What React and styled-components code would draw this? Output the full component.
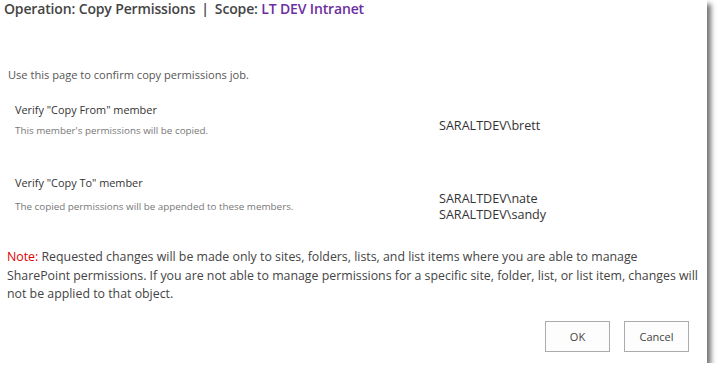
import React from "react";
import styled, { createGlobalStyle } from "styled-components";

const Global = createGlobalStyle`
  html, body { margin: 0; padding: 0; background: #ffffff; }
  body { font-family: "Open Sans", "Noto Sans", sans-serif; }
`;

const Dialog = styled.div`
  width: 707px;
  height: 363px;
  background: #fff;
  box-shadow: 4px 4px 5px rgba(0, 0, 0, 0.55);
  display: flex;
  flex-direction: column;
  box-sizing: border-box;
  padding: 0 0 11px 0;
`;

const Header = styled.div`
  font-size: 14px;
  font-weight: 600;
  color: #444;
  padding: 0 0 0 4px;
  line-height: 18px;
  letter-spacing: -0.15px;
`;

const Scope = styled.span`
  color: #6b2fa0;
`;

const Sep = styled.span`
  padding: 0 6px;
`;

const Intro = styled.div`
  margin: 49px 0 0 8px;
  font-size: 11.1px;
  color: #555;
  line-height: 16px;
`;

const Section = styled.div`
  display: grid;
  grid-template-columns: 424px 1fr;
  align-items: start;
  padding-left: 15px;
  margin-top: ${(p) => p.$top}px;
`;

const Label = styled.div`
  font-size: 10.9px;
  color: #333;
  line-height: 16px;
`;

const Desc = styled.div`
  font-size: 9.85px;
  color: #777;
  line-height: 14px;
  margin-top: ${(p) => p.$top}px;
`;

const Members = styled.div`
  font-size: 12.6px;
  color: #333;
  line-height: 15.5px;
  padding-top: ${(p) => p.$top}px;
`;

const Note = styled.p`
  margin: 26px 0 0 7px;
  font-size: 12.35px;
  line-height: 18.5px;
  color: #444;
  white-space: nowrap;
`;

const NoteLabel = styled.span`
  color: #e00000;
`;

const Footer = styled.div`
  margin-top: auto;
  padding-right: 18px;
  display: flex;
  justify-content: flex-end;
  gap: 14px;
`;

const Button = styled.button`
  width: 65px;
  height: 31px;
  border: 1px solid #ababab;
  background: #fdfdfd;
  font-family: inherit;
  font-size: 11px;
  color: #444;
  padding: 0;
`;

export default function App() {
  return (
    <>
      <Global />
      <Dialog>
        <Header>
          Operation: Copy Permissions<Sep>|</Sep>Scope: <Scope>LT DEV Intranet</Scope>
        </Header>
        <Intro>Use this page to confirm copy permissions job.</Intro>
        <Section $top={19}>
          <div>
            <Label>Verify "Copy From" member</Label>
            <Desc $top={5}>This member's permissions will be copied.</Desc>
          </div>
          <Members $top={16}>SARALTDEV\brett</Members>
        </Section>
        <Section $top={38}>
          <div>
            <Label>Verify "Copy To" member</Label>
            <Desc $top={8}>The copied permissions will be appended to these members.</Desc>
          </div>
          <Members $top={16}>
            SARALTDEV\nate
            <br />
            SARALTDEV\sandy
          </Members>
        </Section>
        <Note>
          <NoteLabel>Note:</NoteLabel> Requested changes will be made only to sites, folders, lists, and list items where you are able to manage
          <br />
          SharePoint permissions. If you are not able to manage permissions for a specific site, folder, list, or list item, changes will
          <br />
          not be applied to that object.
        </Note>
        <Footer>
          <Button>OK</Button>
          <Button>Cancel</Button>
        </Footer>
      </Dialog>
    </>
  );
}
